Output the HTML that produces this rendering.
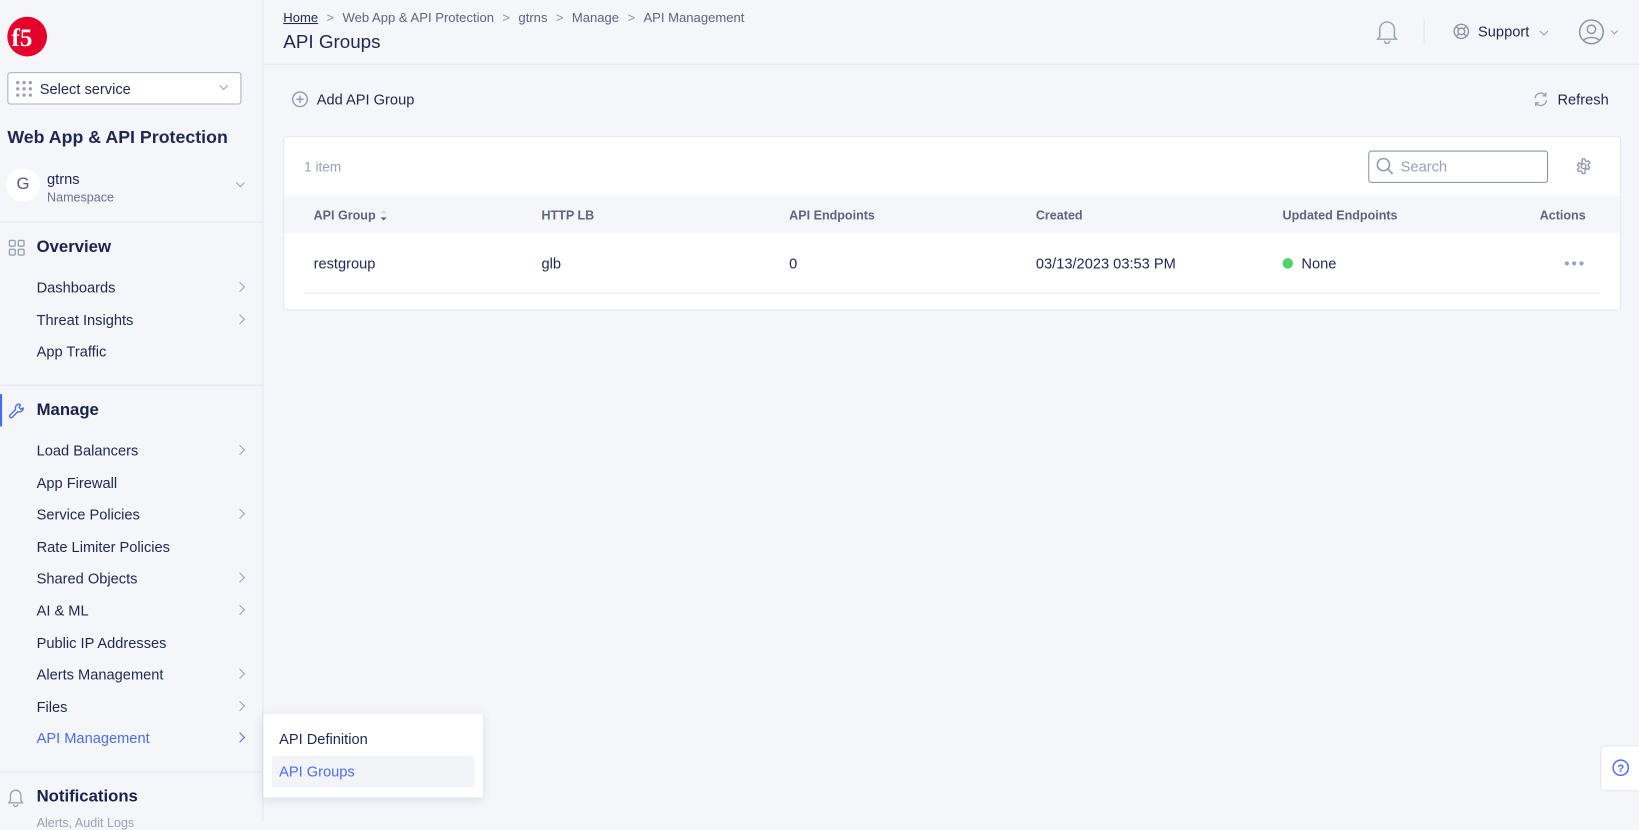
<!DOCTYPE html>
<html><head><meta charset="utf-8">
<style>
*{box-sizing:border-box;margin:0;padding:0}
html,body{width:1639px;height:821px;overflow:hidden;background:#f5f6fa}
#w{position:absolute;left:0;top:0;width:1568px;height:786px;transform:scale(1.04528);transform-origin:0 0;font-family:"Liberation Sans",sans-serif;color:#1f2753;background:#f5f6fa}
.a{position:absolute;white-space:nowrap}
.mi{position:absolute;left:35px;font-size:14px;line-height:16px;color:#1f2753}
.ch{position:absolute;left:226px;width:7px;height:7px;border-right:1.3px solid #9aa1b5;border-top:1.3px solid #9aa1b5;transform:rotate(45deg)}
.hd{position:absolute;top:199px;font-size:12px;font-weight:bold;color:#5d6580}
.cell{position:absolute;top:244px;font-size:14px;color:#1f2753}
.line{position:absolute;background:#e3e6f0}
.sec{font-size:16px;font-weight:600;color:#1a2150}
.bc{margin:0 8px;color:#8a91a8}
</style></head><body><div id="w">
<div class="line" style="left:251px;top:0;width:1px;height:786px"></div>
<svg class="a" style="left:6px;top:15px" width="40" height="40" viewBox="0 0 40 40"><circle cx="20" cy="20" r="19" fill="#e4002b"/><text x="5" y="29" font-family="Liberation Serif,serif" font-weight="bold" font-size="24" fill="#fff">f5</text></svg>
<div class="a" style="left:7px;top:69px;width:224px;height:31px;border:1px solid #aab0c2;border-radius:3px;background:#fff"></div>
<svg class="a" style="left:15px;top:77px" width="16" height="16"><g fill="#9aa1b5"><circle cx="2" cy="2" r="1.6"/><circle cx="8" cy="2" r="1.6"/><circle cx="14" cy="2" r="1.6"/><circle cx="2" cy="8" r="1.6"/><circle cx="8" cy="8" r="1.6"/><circle cx="14" cy="8" r="1.6"/><circle cx="2" cy="14" r="1.6"/><circle cx="8" cy="14" r="1.6"/><circle cx="14" cy="14" r="1.6"/></g></svg>
<div class="a" style="left:38px;top:77px;font-size:14px">Select service</div>
<div class="ch" style="left:211px;top:79px;transform:rotate(135deg);width:6px;height:6px"></div>
<div class="a" style="left:7px;top:122px;font-size:17px;font-weight:bold">Web App &amp; API Protection</div>
<div class="a" style="left:6px;top:161px;width:32px;height:32px;border-radius:50%;background:#fff;font-size:16px;color:#555d75;text-align:center;line-height:32px">G</div>
<div class="a" style="left:45px;top:163px;font-size:14px">gtrns</div>
<div class="a" style="left:45px;top:182px;font-size:12px;color:#6b7390">Namespace</div>
<div class="ch" style="left:227px;top:172px;transform:rotate(135deg);width:6px;height:6px"></div>
<div class="line" style="left:0;top:212px;width:251px;height:1px"></div>
<svg class="a" style="left:8px;top:229px" width="16" height="16"><g fill="none" stroke="#9aa1b5" stroke-width="1.3"><rect x="1" y="1" width="5.5" height="5.5" rx="1"/><rect x="9.5" y="1" width="5.5" height="5.5" rx="1"/><rect x="1" y="9.5" width="5.5" height="5.5" rx="1"/><rect x="9.5" y="9.5" width="5.5" height="5.5" rx="1"/></g></svg>
<div class="a sec" style="left:35px;top:228px">Overview</div>
<div class="mi" style="top:267px">Dashboards</div><div class="ch" style="top:271px"></div>
<div class="mi" style="top:298px">Threat Insights</div><div class="ch" style="top:302px"></div>
<div class="mi" style="top:328px">App Traffic</div>
<div class="line" style="left:0;top:368px;width:251px;height:1px"></div>
<div class="a" style="left:0;top:377px;width:2px;height:31px;background:#4a6cf7"></div>
<svg class="a" style="left:8px;top:385px" width="17" height="17" viewBox="0 0 17 17"><path d="M10.5 1.5a4 4 0 0 0-3.6 5.3L1.5 12.2a1.5 1.5 0 0 0 2.1 2.1L9 8.9a4 4 0 0 0 5.3-3.6l-2.4 1.1-1.6-1.6 1.1-2.4z" fill="none" stroke="#4a6cf7" stroke-width="1.3" stroke-linejoin="round"/></svg>
<div class="a sec" style="left:35px;top:384px">Manage</div>
<div class="mi" style="top:423px">Load Balancers</div><div class="ch" style="top:427px"></div>
<div class="mi" style="top:454px">App Firewall</div>
<div class="mi" style="top:484px">Service Policies</div><div class="ch" style="top:488px"></div>
<div class="mi" style="top:515px">Rate Limiter Policies</div>
<div class="mi" style="top:545px">Shared Objects</div><div class="ch" style="top:549px"></div>
<div class="mi" style="top:576px">AI &amp; ML</div><div class="ch" style="top:580px"></div>
<div class="mi" style="top:607px">Public IP Addresses</div>
<div class="mi" style="top:637px">Alerts Management</div><div class="ch" style="top:641px"></div>
<div class="mi" style="top:668px">Files</div><div class="ch" style="top:672px"></div>
<div class="mi" style="top:698px;color:#4a6cf7">API Management</div><div class="ch" style="top:702px;border-color:#4a6cf7"></div>
<div class="line" style="left:0;top:738px;width:251px;height:1px"></div>
<svg class="a" style="left:7px;top:754px" width="16" height="18" viewBox="0 0 16 18"><path d="M3 12V7a5 5 0 0 1 10 0v5l1.5 2h-13zM6 15.5a2 2 0 0 0 4 0" fill="none" stroke="#9aa1b5" stroke-width="1.3"/></svg>
<div class="a sec" style="left:35px;top:754px">Notifications</div>
<div class="a" style="left:35px;top:780px;font-size:12px;color:#9aa1b5">Alerts, Audit Logs</div>
<div class="a" style="left:252px;top:683px;width:210px;height:80px;background:#fff;border-radius:3px;box-shadow:0 2px 10px rgba(30,40,90,.12)"></div>
<div class="a" style="left:267px;top:699px;font-size:14px">API Definition</div>
<div class="a" style="left:260px;top:723px;width:194px;height:30px;background:#f3f4f8;border-radius:3px"></div>
<div class="a" style="left:267px;top:730px;font-size:14px;color:#4a6cf7">API Groups</div>
<div class="a" style="left:271px;top:10px;font-size:12.5px;color:#5d6580"><span style="text-decoration:underline;color:#1f2753">Home</span><span class="bc">&gt;</span>Web App &amp; API Protection<span class="bc">&gt;</span>gtrns<span class="bc">&gt;</span>Manage<span class="bc">&gt;</span>API Management</div>
<div class="a" style="left:271px;top:30px;font-size:18px">API Groups</div>
<div class="line" style="left:252px;top:61px;width:1316px;height:1px"></div>
<svg class="a" style="left:1316px;top:18px" width="22" height="25" viewBox="0 0 22 25"><path d="M4 17V10a7 7 0 0 1 14 0v7l2 2.5H2zM8.5 21a2.5 2.5 0 0 0 5 0" fill="none" stroke="#9aa1b5" stroke-width="1.4"/></svg>
<div class="line" style="left:1362px;top:18px;width:1px;height:24px"></div>
<svg class="a" style="left:1390px;top:22px" width="16" height="16" viewBox="0 0 16 16"><g fill="none" stroke="#8a91a8" stroke-width="1.3"><circle cx="8" cy="8" r="6.8"/><circle cx="8" cy="8" r="3.2"/><path d="M3.2 3.2l2.5 2.5M12.8 3.2l-2.5 2.5M3.2 12.8l2.5-2.5M12.8 12.8l-2.5-2.5"/></g></svg>
<div class="a" style="left:1414px;top:22px;font-size:14px">Support</div>
<div class="ch" style="left:1474px;top:27px;transform:rotate(135deg);width:6px;height:6px"></div>
<svg class="a" style="left:1510px;top:18px" width="25" height="25" viewBox="0 0 25 25"><g fill="none" stroke="#8a91a8" stroke-width="1.4"><circle cx="12.5" cy="12.5" r="11.3"/><circle cx="12.5" cy="10" r="4"/><path d="M5 20.5a9 6 0 0 1 15 0"/></g></svg>
<div class="ch" style="left:1542px;top:27px;transform:rotate(135deg);width:5px;height:5px"></div>
<svg class="a" style="left:279px;top:87px" width="16" height="16" viewBox="0 0 16 16"><g fill="none" stroke="#8a91a8" stroke-width="1.2"><circle cx="8" cy="8" r="7"/><path d="M8 4.5v7M4.5 8h7"/></g></svg>
<div class="a" style="left:303px;top:87px;font-size:14px">Add API Group</div>
<svg class="a" style="left:1466px;top:87px" width="16" height="16" viewBox="0 0 16 16"><g fill="none" stroke="#9aa1b5" stroke-width="1.3"><path d="M2.5 7A5.5 5.5 0 0 1 12.5 4.5M13.5 9A5.5 5.5 0 0 1 3.5 11.5"/><path d="M12.8 1.5v3.2H9.6M3.2 14.5v-3.2h3.2"/></g></svg>
<div class="a" style="left:1490px;top:87px;font-size:14px">Refresh</div>
<div class="a" style="left:271px;top:130px;width:1280px;height:167px;background:#fff;border:1px solid #e3e6f0;border-radius:3px"></div>
<div class="a" style="left:291px;top:152px;font-size:13px;color:#9aa1b5">1 item</div>
<div class="a" style="left:1309px;top:144px;width:172px;height:31px;border:1px solid #8a91a8;border-radius:3px;background:#fff"></div>
<svg class="a" style="left:1316px;top:150px" width="18" height="18" viewBox="0 0 18 18"><g fill="none" stroke="#8a91a8" stroke-width="1.4"><circle cx="7.5" cy="7.5" r="5.8"/><path d="M11.8 11.8l4.5 4.5"/></g></svg>
<div class="a" style="left:1340px;top:151px;font-size:14px;color:#9aa1b5">Search</div>
<svg class="a" style="left:1507px;top:151px" width="16" height="16" viewBox="0 0 16 16"><g fill="none" stroke="#8a91a8" stroke-width="1.2"><path d="M6.8 1h2.4l.4 1.9 1.3.7 1.8-.7 1.2 2-1.5 1.3v1.6l1.5 1.3-1.2 2-1.8-.7-1.3.7L9.2 15H6.8l-.4-1.9-1.3-.7-1.8.7-1.2-2 1.5-1.3V8.2L2.1 6.9l1.2-2 1.8.7 1.3-.7z"/><circle cx="8" cy="8" r="2.3"/></g></svg>
<div class="a" style="left:272px;top:187px;width:1278px;height:36px;background:#f5f6fa"></div>
<div class="hd" style="left:300px">API Group</div>
<svg class="a" style="left:363px;top:200px" width="8" height="12"><path d="M1 4l3-3 3 3z" fill="#d5d8e2"/><path d="M1 8l3 3 3-3z" fill="#5d6580"/></svg>
<div class="hd" style="left:518px">HTTP LB</div>
<div class="hd" style="left:755px">API Endpoints</div>
<div class="hd" style="left:991px">Created</div>
<div class="hd" style="left:1227px">Updated Endpoints</div>
<div class="hd" style="left:1473px">Actions</div>
<div class="cell" style="left:300px">restgroup</div>
<div class="cell" style="left:518px">glb</div>
<div class="cell" style="left:755px">0</div>
<div class="cell" style="left:991px">03/13/2023 03:53 PM</div>
<div class="a" style="left:1227px;top:247px;width:10px;height:10px;border-radius:50%;background:#4fd36a"></div>
<div class="cell" style="left:1245px">None</div>
<svg class="a" style="left:1496px;top:249px" width="20" height="6"><g fill="#9aa1b5"><circle cx="3" cy="3" r="2"/><circle cx="10" cy="3" r="2"/><circle cx="17" cy="3" r="2"/></g></svg>
<div class="line" style="left:291px;top:280px;width:1239px;height:1px"></div>
<div class="a" style="left:1531px;top:713px;width:40px;height:44px;background:#fff;border:1px solid #e3e6f0;border-radius:4px 0 0 4px"></div>
<svg class="a" style="left:1542px;top:726px" width="17" height="17" viewBox="0 0 17 17"><circle cx="8.5" cy="8.5" r="7.3" fill="none" stroke="#4a6cf7" stroke-width="1.4"/><text x="8.5" y="12.5" text-anchor="middle" font-family="Liberation Sans,sans-serif" font-size="11" font-weight="bold" fill="#4a6cf7">?</text></svg>
</div></body></html>
